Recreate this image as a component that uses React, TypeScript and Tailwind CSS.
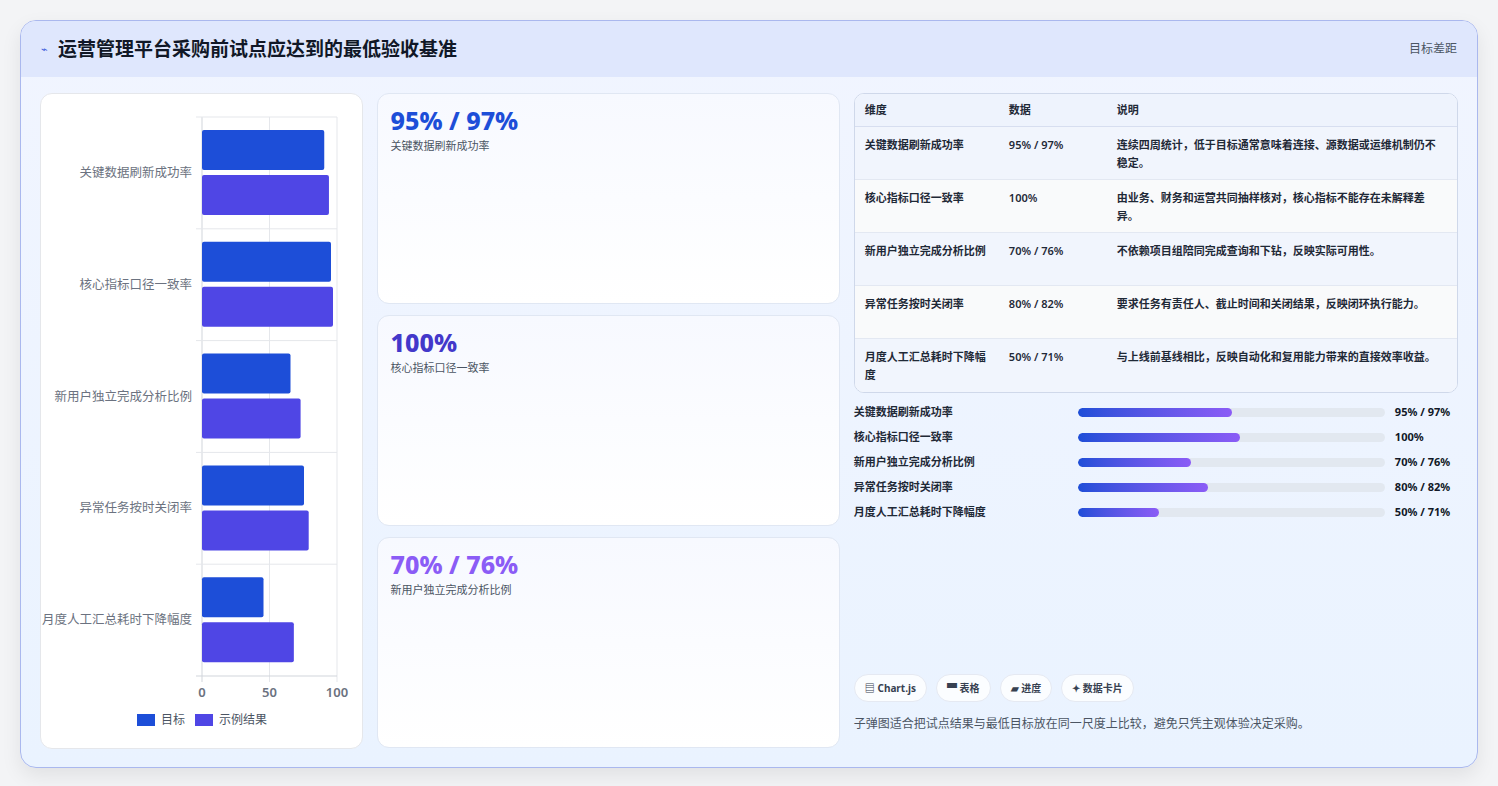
import React from "react";

const font = { fontFamily: '"Noto Sans","Noto Sans CJK SC",sans-serif' };

const cats = ["关键数据刷新成功率", "核心指标口径一致率", "新用户独立完成分析比例", "异常任务按时关闭率", "月度人工汇总耗时下降幅度"];
const target = [95, 100, 70, 80, 50];
const result = [97, 100, 76, 82, 71];

function Chart() {
  const x0 = 161, w = 135, top = 23, band = 111.8;
  return (
    <svg width="322" height="655" viewBox="0 0 322 655" style={font}>
      <defs>
        <clipPath id="c"><rect x="0" y="0" width="322" height="655" /></clipPath>
      </defs>
      {[0, 50, 100].map((v) => (
        <line key={v} x1={x0 + (v / 100) * w} x2={x0 + (v / 100) * w} y1={top} y2={top + band * 5 + 6} stroke={v === 0 ? "#d1d5db" : "#e5e7eb"} />
      ))}
      {[0, 1, 2, 3, 4, 5].map((i) => (
        <line key={i} x1={x0 - 6} x2={x0 + w} y1={top + i * band} y2={top + i * band} stroke={i === 5 ? "#d1d5db" : "#e5e7eb"} />
      ))}
      {cats.map((c, i) => {
        const y = top + i * band;
        return (
          <g key={c}>
            <rect x={x0} y={y + 13} width={(target[i] / 100) * w - 6} height={40} rx="2" fill="#1d4ed8" />
            <rect x={x0} y={y + 58} width={(result[i] / 100) * w - 4} height={40} rx="2" fill="#4f46e5" />
            <text x={x0 - 10} y={y + 60} textAnchor="end" fontSize="12.5" fill="#6b7280">{c}</text>
          </g>
        );
      })}
      {[0, 50, 100].map((v) => (
        <text key={v} x={x0 + (v / 100) * w} y={603} textAnchor="middle" fontSize="13" fontWeight="600" fill="#6b7280">{v}</text>
      ))}
      <rect x="96" y="620" width="18" height="12" fill="#1d4ed8" />
      <text x="120" y="630" fontSize="12" fill="#4b5563">目标</text>
      <rect x="154" y="620" width="18" height="12" fill="#4f46e5" />
      <text x="178" y="630" fontSize="12" fill="#4b5563">示例结果</text>
    </svg>
  );
}

const rows = [
  ["关键数据刷新成功率", "95% / 97%", "连续四周统计，低于目标通常意味着连接、源数据或运维机制仍不稳定。"],
  ["核心指标口径一致率", "100%", "由业务、财务和运营共同抽样核对，核心指标不能存在未解释差异。"],
  ["新用户独立完成分析比例", "70% / 76%", "不依赖项目组陪同完成查询和下钻，反映实际可用性。"],
  ["异常任务按时关闭率", "80% / 82%", "要求任务有责任人、截止时间和关闭结果，反映闭环执行能力。"],
  ["月度人工汇总耗时下降幅度", "50% / 71%", "与上线前基线相比，反映自动化和复用能力带来的直接效率收益。"],
];
const prog = [154, 162, 113, 130, 81];

export default function App() {
  return (
    <div className="w-[1498px] h-[786px] bg-[#f3f4f6] pt-[20px] px-[20px]" style={font}>
      <div className="h-[748px] rounded-[16px] border border-[#aab8ee] bg-gradient-to-b from-[#f1f5ff] to-[#eaf3ff] overflow-hidden shadow-[0_8px_20px_rgba(0,0,0,0.08)]">
        <div className="h-[56px] bg-[#dfe7fd] flex items-center justify-between pl-[20px] pr-[20px]">
          <div className="flex items-center gap-[10px]">
            <span className="text-[#3b5bdb] text-[11px]">⌁</span>
            <span className="text-[19px] font-bold text-[#111827]">运营管理平台采购前试点应达到的最低验收基准</span>
          </div>
          <span className="text-[12px] text-[#4b5563]">目标差距</span>
        </div>
        <div className="flex gap-[14px] px-[19px] pt-[16px]">
          <div className="w-[323px] h-[656px] bg-white rounded-[12px] border border-[#e5e7eb] overflow-hidden">
            <Chart />
          </div>
          <div className="w-[464px] flex flex-col gap-[11px]">
            {[
              ["95% / 97%", "关键数据刷新成功率", "text-[#1d4ed8]"],
              ["100%", "核心指标口径一致率", "text-[#4338ca]"],
              ["70% / 76%", "新用户独立完成分析比例", "text-[#8b5cf6]"],
            ].map(([v, l, c]) => (
              <div key={l} className="h-[211px] rounded-[12px] border border-[#e0e7f3] bg-gradient-to-b from-[#f7f9ff] to-white px-[13px] pt-[10px]">
                <div className={`text-[25px] font-extrabold leading-[32px] ${c}`}>{v}</div>
                <div className="text-[11px] text-[#4b5563] mt-[2px]">{l}</div>
              </div>
            ))}
          </div>
          <div className="w-[605px] flex flex-col">
            <div className="rounded-[10px] border border-[#cfd8ea] overflow-hidden bg-white">
              <div className="flex h-[33px] items-center bg-[#eef3fd] text-[11px] font-bold text-[#1f2937] border-b border-[#d7def0]">
                <div className="w-[144px] pl-[10px]">维度</div>
                <div className="w-[108px] pl-[10px]">数据</div>
                <div className="flex-1 pl-[10px]">说明</div>
              </div>
              {rows.map((r, i) => (
                <div key={i} className={`flex h-[53px] pt-[9px] text-[11px] font-semibold text-[#1f2937] leading-[18px] ${i % 2 ? "bg-[#f9fafb]" : "bg-[#f1f5fd]"} ${i < 4 ? "border-b border-[#e3e8f2]" : ""}`}>
                  <div className="w-[144px] pl-[10px] pr-[10px]">{r[0]}</div>
                  <div className="w-[108px] pl-[10px]">{r[1]}</div>
                  <div className="flex-1 pl-[10px] pr-[16px]">{r[2]}</div>
                </div>
              ))}
            </div>
            <div className="mt-[10px] flex flex-col gap-[7px]">
              {rows.map((r, i) => (
                <div key={i} className="flex items-center h-[18px] text-[11px] font-semibold text-[#1f2937]">
                  <div className="w-[224px]">{r[0]}</div>
                  <div className="w-[307px] h-[9px] rounded-full bg-[#e2e8f0] overflow-hidden">
                    <div className="h-full rounded-full bg-gradient-to-r from-[#1d4ed8] to-[#8b5cf6]" style={{ width: prog[i] }} />
                  </div>
                  <div className="ml-[10px] font-bold text-[#111827]">{r[1]}</div>
                </div>
              ))}
            </div>
            <div className="flex-1" />
            <div className="flex gap-[9px] text-[10px] font-bold text-[#374151]">
              {["▤ Chart.js", "▀ 表格", "▰ 进度", "✦ 数据卡片"].map((t) => (
                <span key={t} className="h-[28px] px-[10px] rounded-full bg-white/80 border border-[#e5e9f2] flex items-center">{t}</span>
              ))}
            </div>
            <div className="text-[12px] text-[#4b5563] mt-[13px] mb-[16px]">子弹图适合把试点结果与最低目标放在同一尺度上比较，避免只凭主观体验决定采购。</div>
          </div>
        </div>
      </div>
    </div>
  );
}
